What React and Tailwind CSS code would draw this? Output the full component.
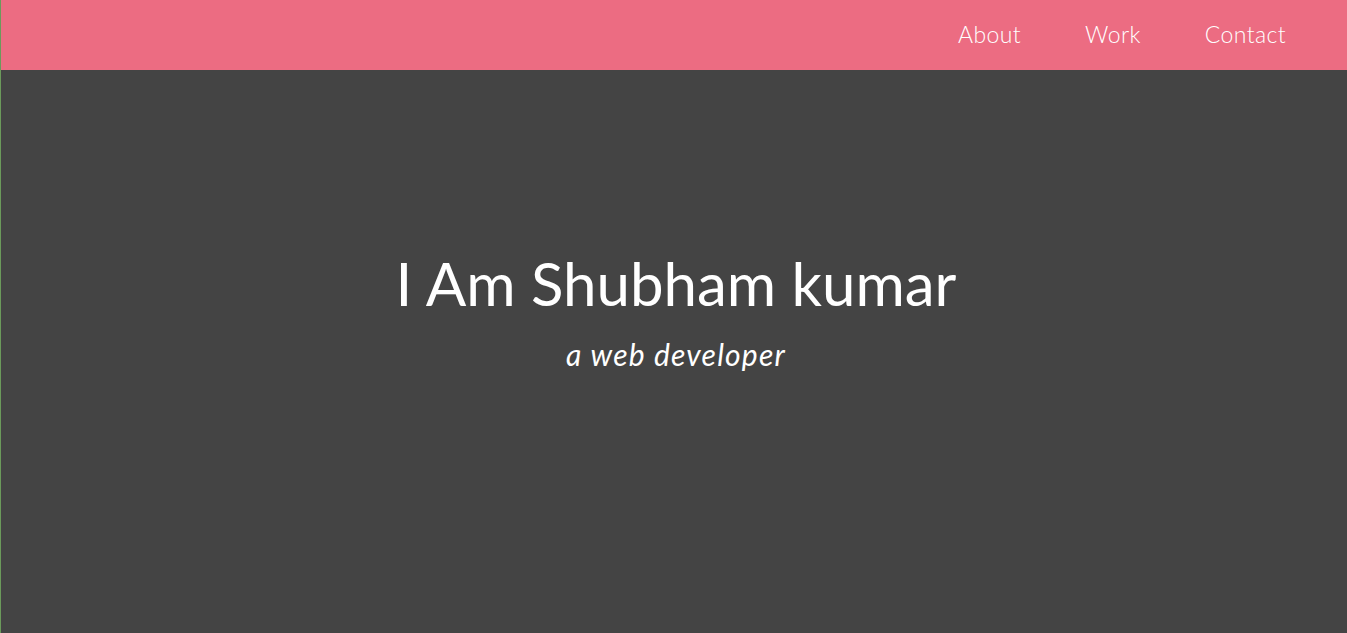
export default function App() {
  const links = ["About", "Work", "Contact"];
  return (
    <div className="min-h-[633px] bg-[#444444] border-l border-[#6b9a5b] font-['Lato','Open_Sans',sans-serif] text-white">
      <header className="h-[70px] bg-[#ec6c82] flex items-center justify-end pr-[61px] pb-[2px]">
        <nav className="flex gap-[64px] text-[23px] font-light tracking-[0.4px]">
          {links.map((l) => (
            <a key={l} href="#" className="leading-none">
              {l}
            </a>
          ))}
        </nav>
      </header>
      <main className="flex flex-col items-center pt-[183px] pl-[4px]">
        <h1 className="text-[60px] leading-none">I Am Shubham kumar</h1>
        <p className="mt-[26px] text-[30px] italic leading-none tracking-[1.2px]">a web developer</p>
      </main>
    </div>
  );
}
